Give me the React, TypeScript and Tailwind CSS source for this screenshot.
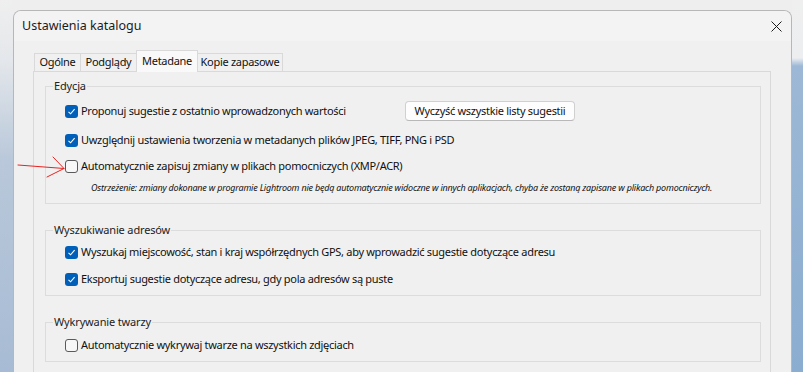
import React from 'react';

const font = "font-['Segoe_UI','Noto_Sans',sans-serif]";
const body = 'text-[11px] tracking-[-0.3px] text-[#111]';

function Check({ checked }: { checked?: boolean }) {
  if (checked) {
    return (
      <span className="flex-shrink-0 w-[13px] h-[13px] rounded-[3px] bg-[#005fb8] flex items-center justify-center">
        <svg width="9" height="9" viewBox="0 0 9 9">
          <path d="M1.5 4.8 L3.6 6.8 L7.6 2.2" fill="none" stroke="#fff" strokeWidth="1.1" />
        </svg>
      </span>
    );
  }
  return <span className="flex-shrink-0 w-[13px] h-[13px] rounded-[3px] border border-[#5a5a5a] bg-[#f7f7f7]" />;
}

function Option({ checked, label }: { checked?: boolean; label: string }) {
  return (
    <div className="flex items-center gap-[3px] h-[20px]">
      <Check checked={checked} />
      <span className={`${body} whitespace-nowrap`}>{label}</span>
    </div>
  );
}

function Group({ title, className, children }: { title: string; className?: string; children: React.ReactNode }) {
  return (
    <div className={`flex-shrink-0 border border-[#dcdcdc] flex flex-col pl-[19px] ${className ?? ''}`}>
      <span className="-mt-[8px] -ml-[12px] w-fit px-[1px] bg-[#f0f0f0] text-[11px] tracking-[-0.15px] leading-[14px] text-[#222]">
        {title}
      </span>
      {children}
    </div>
  );
}

const tabs = [
  { label: 'Ogólne', w: 'w-[46px]' },
  { label: 'Podglądy', w: 'w-[56px]' },
  { label: 'Metadane', w: 'w-[62px]', active: true },
  { label: 'Kopie zapasowe', w: 'w-[85px]' },
];

export default function App() {
  return (
    <div className={`relative w-[803px] h-[372px] overflow-hidden flex bg-[#eeeeee] ${font}`}>
      {/* desktop behind, left */}
      <div className="w-[13px] flex-shrink-0 bg-[linear-gradient(to_bottom,#efefef_0,#e4e7eb_60px,#b9c8da_160px,#a7bbd4_372px)]" />

      {/* dialog */}
      <div className="mt-[10px] w-[779px] flex-shrink-0 rounded-t-[8px] border border-b-0 border-[#b7b7b7] bg-[#f0f0f0] flex flex-col overflow-hidden">
        {/* title bar */}
        <div className="flex-shrink-0 h-[30px] bg-[#f3f3f3] flex items-center justify-between pl-[8px] pr-[8px]">
          <span className="text-[12.5px] text-[#1b1b1b]">Ustawienia katalogu</span>
          <svg width="11" height="11" viewBox="0 0 11 11" className="mr-[1px]">
            <path d="M0.5 0.5 L10.5 10.5 M10.5 0.5 L0.5 10.5" stroke="#1b1b1b" strokeWidth="1" />
          </svg>
        </div>

        <div className="flex-shrink-0 flex flex-col pl-[19px] pr-[20px] pt-[10px]">
          {/* tabs */}
          <div className="flex items-end ml-[1px] h-[20px]">
            {tabs.map((t, i) =>
              t.active ? (
                <div
                  key={i}
                  className={`${t.w} h-[22px] -mb-[1px] relative z-10 bg-[#f9f9f9] border border-b-0 border-[#d9d9d9] flex items-center justify-center ${body} whitespace-nowrap`}
                >
                  {t.label}
                </div>
              ) : (
                <div
                  key={i}
                  className={`${t.w} h-[18px] bg-[#f0f0f0] border-t border-[#d9d9d9] ${i === 0 || i === 1 ? 'border-l' : ''} ${i === tabs.length - 1 ? 'border-r' : ''} flex items-center justify-center ${body} whitespace-nowrap`}
                >
                  {t.label}
                </div>
              )
            )}
          </div>

          {/* panel */}
          <div className="h-[320px] border border-[#d9d9d9] bg-[#f0f0f0] pl-[11px] pr-[9px] pt-[14px] flex flex-col">
            <Group title="Edycja" className="pb-[8px]">
              <div className="flex items-center mt-[8px]">
                <div className="w-[340px]">
                  <Option checked label="Proponuj sugestie z ostatnio wprowadzonych wartości" />
                </div>
                <button className={`w-[170px] h-[20px] rounded-[4px] bg-[#fdfdfd] border border-[#d0d0d0] border-b-[#b8b8b8] flex items-center justify-center ${body} whitespace-nowrap`}>
                  Wyczyść wszystkie listy sugestii
                </button>
              </div>
              <div className="mt-[9px]">
                <Option checked label="Uwzględnij ustawienia tworzenia w metadanych plików JPEG, TIFF, PNG i PSD" />
              </div>
              <div className="mt-[6px]">
                <Option label="Automatycznie zapisuj zmiany w plikach pomocniczych (XMP/ACR)" />
              </div>
              <div className="mt-[5px] ml-[26px] h-[14px] flex items-center text-[9px] tracking-[-0.2px] italic text-[#111] whitespace-nowrap">
                Ostrzeżenie: zmiany dokonane w programie Lightroom nie będą automatycznie widoczne w innych aplikacjach, chyba że zostaną zapisane w plikach pomocniczych.
              </div>
            </Group>

            <Group title="Wyszukiwanie adresów" className="mt-[26px] pb-[6px]">
              <div className="mt-[5px]">
                <Option checked label="Wyszukaj miejscowość, stan i kraj współrzędnych GPS, aby wprowadzić sugestie dotyczące adresu" />
              </div>
              <div className="mt-[7px]">
                <Option checked label="Eksportuj sugestie dotyczące adresu, gdy pola adresów są puste" />
              </div>
            </Group>

            <Group title="Wykrywanie twarzy" className="mt-[26px] pb-[6px]">
              <div className="mt-[6px]">
                <Option label="Automatycznie wykrywaj twarze na wszystkich zdjęciach" />
              </div>
            </Group>
          </div>
        </div>
      </div>

      {/* desktop behind, right */}
      <div className="flex-1 bg-[linear-gradient(to_bottom,#efefef_0,#eceef0_58px,#9db8d6_66px,#8badd0_372px)]" />

      {/* red annotation arrow */}
      <svg className="absolute left-0 top-0 pointer-events-none" width="80" height="190" viewBox="0 0 80 190">
        <path d="M18 165 L64 168.5 M53 157 L64 168.5 L47 177" fill="none" stroke="#e8231f" strokeWidth="1" strokeLinecap="round" strokeLinejoin="round" />
      </svg>
    </div>
  );
}
